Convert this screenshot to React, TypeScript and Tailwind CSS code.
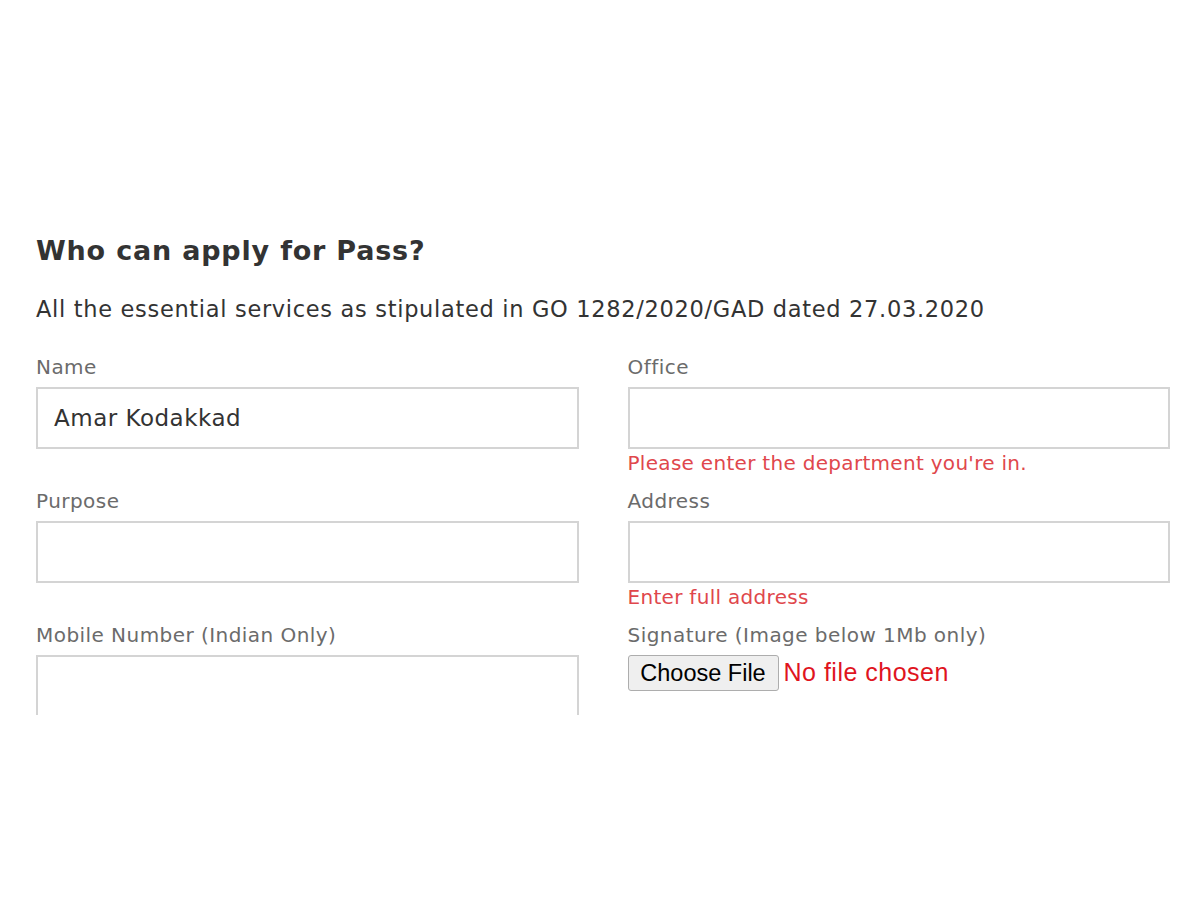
import React from "react";

function Field({
  label,
  value,
  error,
}: {
  label: string;
  value?: string;
  error?: string;
}) {
  return (
    <div className="flex flex-col">
      <label className="h-6 text-[20px] leading-6 tracking-[0.45px] text-[#6b6b6b]">{label}</label>
      <div className="mt-2 flex h-[62px] items-center border-2 border-[#d4d4d4] bg-white px-4 text-[23px] tracking-[0.5px] text-[#333]">
        {value}
      </div>
      <div className="h-7 text-[20px] leading-7 tracking-[0.3px] text-[#e0474c]">{error}</div>
    </div>
  );
}

export default function App() {
  return (
    <div className="min-h-screen bg-white" style={{ fontFamily: '"DejaVu Sans", Verdana, sans-serif' }}>
      <div className="h-[715px] overflow-hidden px-9 pt-[233px]">
        <h2 className="text-[27px] font-bold leading-9 tracking-[0.8px] text-[#333]">
          Who can apply for Pass?
        </h2>
        <p className="mt-[26px] text-[22.5px] leading-7 tracking-[0.68px] text-[#333]">
          All the essential services as stipulated in GO 1282/2020/GAD dated 27.03.2020
        </p>
        <div className="mt-[32px] grid grid-cols-2 gap-x-[49px] gap-y-3" style={{ width: 1134 }}>
          <Field label="Name" value="Amar Kodakkad" />
          <Field label="Office" error="Please enter the department you're in." />
          <Field label="Purpose" />
          <Field label="Address" error="Enter full address" />
          <Field label="Mobile Number (Indian Only)" />
          <div className="flex flex-col">
            <label className="h-6 text-[20px] leading-6 tracking-[0.45px] text-[#6b6b6b]">
              Signature (Image below 1Mb only)
            </label>
            <div
              className="mt-[7px] flex items-center"
              style={{ fontFamily: '"Liberation Sans", Arial, sans-serif' }}
            >
              <button className="h-9 w-[151px] rounded-[3px] border border-[#adadad] bg-[#efefef] text-[23.5px] text-black">
                Choose File
              </button>
              <span className="ml-[5px] text-[25px] tracking-[0.5px] text-[#e0141e]">No file chosen</span>
            </div>
          </div>
        </div>
      </div>
    </div>
  );
}
